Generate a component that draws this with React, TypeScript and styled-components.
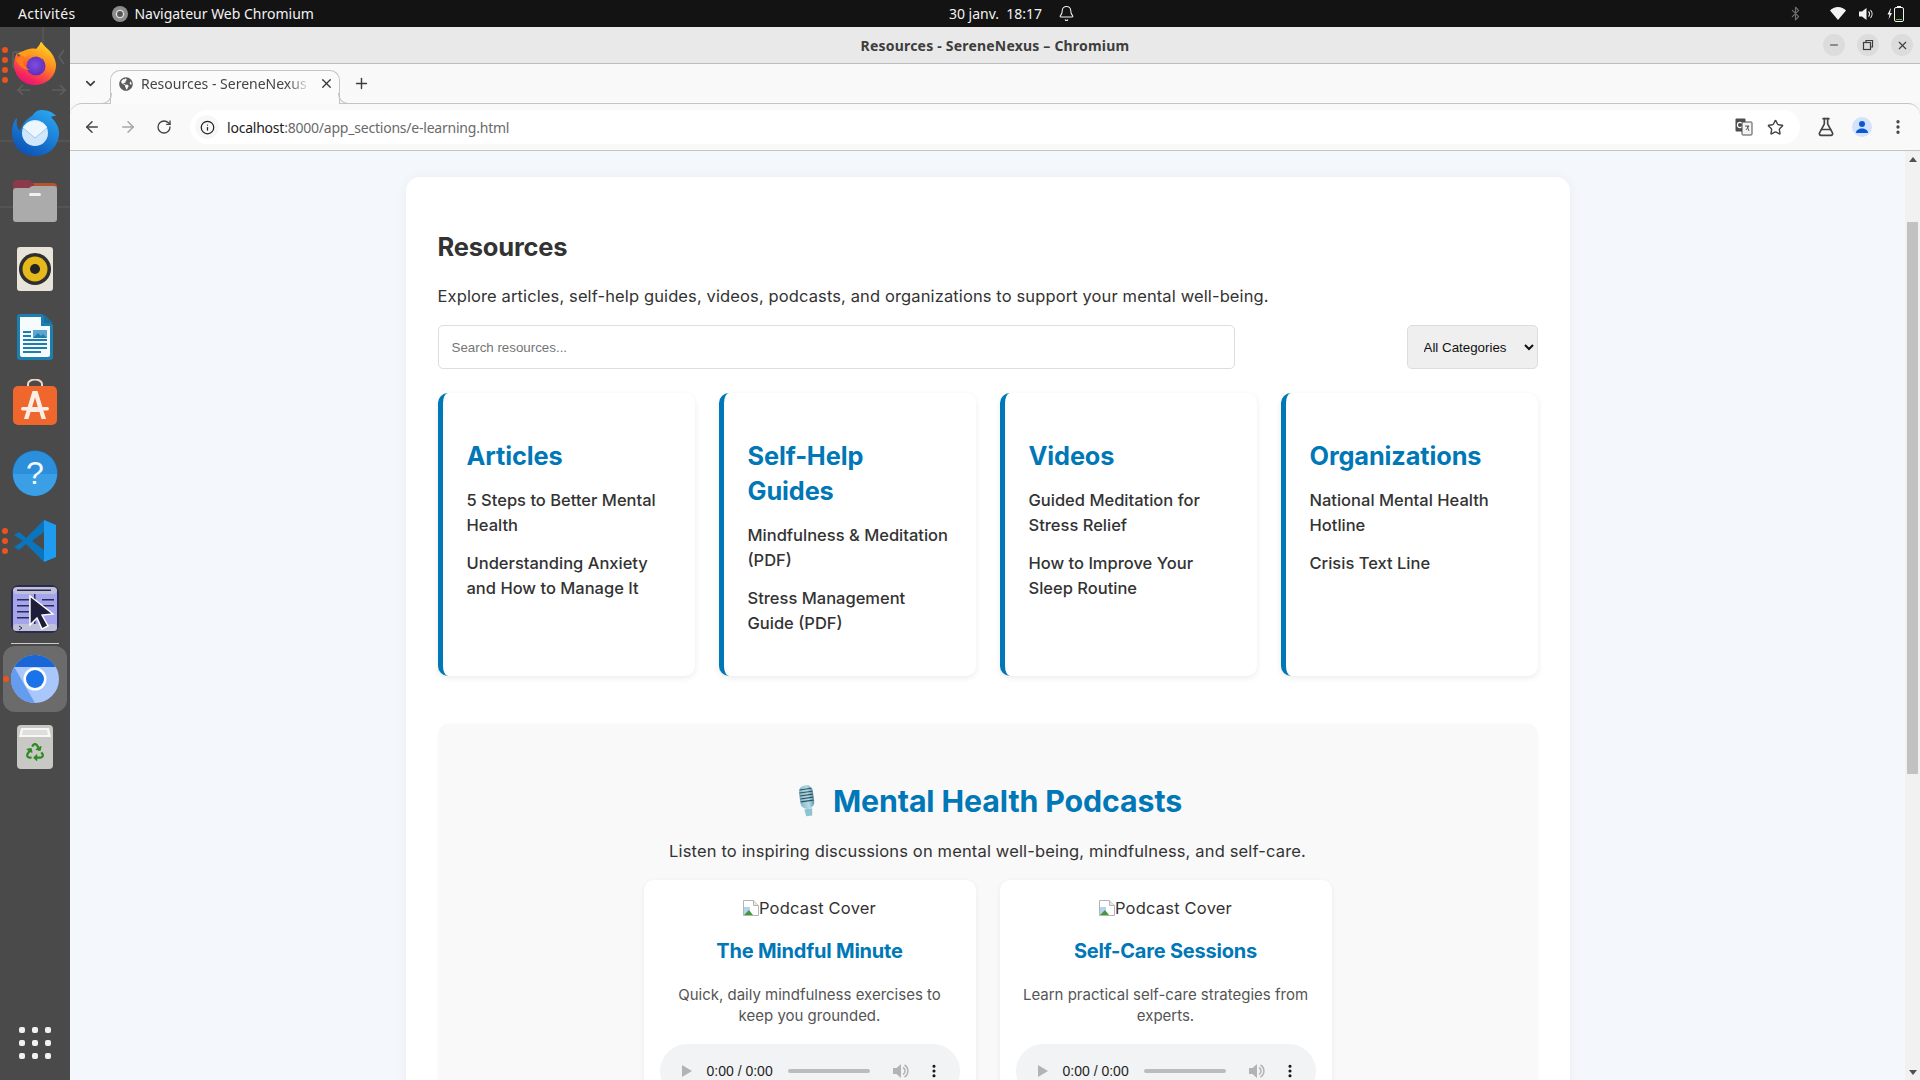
import styled, { createGlobalStyle } from "styled-components";
import {
  ArrowLeft,
  ArrowRight,
  Bell,
  Bluetooth,
  ChevronDown,
  EllipsisVertical,
  FlaskConical,
  Info,
  Minus,
  Plus,
  RotateCw,
  Star,
  X,
} from "lucide-react";
import { FaGlobeAmericas, FaRecycle } from "react-icons/fa";

const BLUE = "#0077b6";
const UI_FONT = `"Noto Sans", "Open Sans", "Liberation Sans", sans-serif`;
const PAGE_FONT = `Inter, "Open Sans", "Liberation Sans", sans-serif`;

const GlobalStyle = createGlobalStyle`
  html, body {
    margin: 0;
    padding: 0;
    height: 100%;
    overflow: hidden;
  }
  * {
    box-sizing: border-box;
  }
`;

const Desktop = styled.div`
  width: 1920px;
  height: 1080px;
  display: flex;
  flex-direction: column;
  overflow: hidden;
  font-family: ${UI_FONT};
`;

const TopBar = styled.header`
  height: 27px;
  flex: none;
  background: #131313;
  color: #f2f2f2;
  font-size: 14px;
  display: grid;
  grid-template-columns: 1fr auto 1fr;
  align-items: center;
  padding: 0 16px 0 18px;
`;

const TopLeft = styled.div`
  display: flex;
  align-items: center;
  letter-spacing: 0.3px;
`;

const AppName = styled.span`
  display: flex;
  align-items: center;
  gap: 6px;
  margin-left: 37px;
  letter-spacing: 0;
`;

const Clock = styled.div`
  display: flex;
  align-items: center;
  gap: 16px;
  margin-left: 102px;
`;

const Tray = styled.div`
  display: flex;
  align-items: center;
  justify-content: flex-end;
  gap: 13px;
`;

const TrayBluetooth = styled(Bluetooth)`
  margin-right: 14px;
`;

const Body = styled.div`
  flex: 1;
  min-height: 0;
  display: flex;
`;

const Dock = styled.nav`
  position: relative;
  width: 70px;
  flex: none;
  background: #4a4a4a;
  padding-top: 4px;
  display: flex;
  flex-direction: column;
  align-items: center;
`;

const DockGhost = styled.svg`
  position: absolute;
  left: 0;
  top: 0;
`;

const DockSlot = styled.div<{ $active?: boolean }>`
  position: relative;
  width: 64px;
  height: ${(p) => (p.$active ? 66 : 68)}px;
  margin: ${(p) => (p.$active ? "1px 0" : "0")};
  flex: none;
  display: flex;
  align-items: center;
  justify-content: center;
  border-radius: 12px;
  background: ${(p) => (p.$active ? "#6b6b6b" : "transparent")};
`;

const RunDots = styled.div<{ $left?: number }>`
  position: absolute;
  left: ${(p) => p.$left ?? -1}px;
  top: 50%;
  transform: translateY(-50%);
  display: flex;
  flex-direction: column;
  gap: 4px;
`;

const RunDot = styled.i`
  display: block;
  width: 6px;
  height: 6px;
  border-radius: 50%;
  background: #e9541f;
`;

const DockRule = styled.div`
  width: 48px;
  height: 1px;
  flex: none;
  background: #c9c9c9;
  margin-bottom: 1px;
`;

const AppGrid = styled.div`
  margin-top: auto;
  margin-bottom: 21px;
  display: grid;
  grid-template-columns: repeat(3, 6px);
  gap: 7px;
`;

const AppGridDot = styled.i`
  width: 6px;
  height: 6px;
  border-radius: 2px;
  background: #f1f1f1;
`;

const Browser = styled.main`
  flex: 1;
  min-width: 0;
  display: flex;
  flex-direction: column;
  background: #f4f7fb;
`;

const TitleBar = styled.div`
  height: 37px;
  flex: none;
  background: #e9e9e9;
  border-bottom: 1px solid #bdbdbd;
  display: flex;
  align-items: center;
  justify-content: flex-end;
  position: relative;
  padding-right: 7px;
  gap: 12px;
`;

const WindowTitle = styled.div`
  position: absolute;
  left: 0;
  right: 0;
  text-align: center;
  font-size: 14px;
  font-weight: 700;
  letter-spacing: 0.2px;
  color: #3d3d3d;
`;

const WindowButton = styled.button`
  width: 22px;
  height: 22px;
  border: none;
  padding: 0;
  border-radius: 50%;
  background: #dcdcdc;
  color: #3d3d3d;
  display: flex;
  align-items: center;
  justify-content: center;
`;

const TabStrip = styled.div`
  height: 39px;
  flex: none;
  background: #f9f9f9;
  display: flex;
  align-items: flex-end;
  padding-left: 7px;
`;

const StripButton = styled.div`
  width: 26px;
  height: 33px;
  padding-bottom: 6px;
  display: flex;
  align-items: center;
  justify-content: center;
  color: #3c3c3c;
  flex: none;
`;

const Tab = styled.div`
  position: relative;
  z-index: 1;
  width: 230px;
  height: 34px;
  margin: 0 8px -1px 7px;
  background: #fbfbfb;
  border: 1px solid #c4c4c4;
  border-bottom: none;
  border-radius: 10px 10px 0 0;
  display: flex;
  align-items: center;
  padding: 0 5px 8px 8px;
  gap: 8px;
  color: #5c5c5c;
  &::before,
  &::after {
    content: "";
    position: absolute;
    bottom: 0;
    width: 10px;
    height: 10px;
    border-bottom: 1px solid #c4c4c4;
  }
  &::before {
    left: -10px;
    border-right: 1px solid #c4c4c4;
    border-bottom-right-radius: 10px;
  }
  &::after {
    right: -10px;
    border-left: 1px solid #c4c4c4;
    border-bottom-left-radius: 10px;
  }
`;

const TabTitle = styled.span`
  flex: 1;
  min-width: 0;
  white-space: nowrap;
  overflow: hidden;
  font-size: 14px;
  color: #454545;
  -webkit-mask-image: linear-gradient(to right, #000 86%, transparent 100%);
  mask-image: linear-gradient(to right, #000 86%, transparent 100%);
`;

const Toolbar = styled.div`
  height: 48px;
  flex: none;
  background: #f9f9f9;
  border-top: 1px solid #c4c4c4;
  border-bottom: 1px solid #c4c4c4;
  border-radius: 12px 12px 0 0;
  display: flex;
  align-items: center;
  padding: 0 4px;
`;

const NavButton = styled.div<{ $muted?: boolean }>`
  width: 36px;
  height: 34px;
  flex: none;
  display: flex;
  align-items: center;
  justify-content: center;
  color: ${(p) => (p.$muted ? "#a6a6a6" : "#444")};
`;

const Omnibox = styled.div`
  flex: 1;
  height: 34px;
  margin: 0 8px;
  background: #ffffff;
  border-radius: 17px;
  display: flex;
  align-items: center;
  padding: 0 8px 0 5px;
`;

const InfoChip = styled.div`
  width: 24px;
  height: 24px;
  margin-right: 8px;
  border-radius: 50%;
  background: #f7f7f7;
  display: flex;
  align-items: center;
  justify-content: center;
  color: #222;
`;

const Url = styled.div`
  flex: 1;
  font-size: 14px;
  color: #6a6a6a;
  letter-spacing: -0.22px;
`;

const UrlHost = styled.span`
  color: #1c1c1c;
`;

const BookmarkStar = styled(Star)`
  margin: 0 8px 0 14px;
  color: #444;
`;

const Avatar = styled.div`
  width: 20px;
  height: 20px;
  border-radius: 50%;
  background: #d3e3fd;
  display: flex;
  align-items: center;
  justify-content: center;
`;

const Viewport = styled.div`
  flex: 1;
  min-height: 0;
  display: flex;
`;

const Page = styled.div`
  flex: 1;
  min-width: 0;
  overflow: hidden;
  padding-top: 26px;
  display: flex;
  justify-content: center;
  font-family: ${PAGE_FONT};
`;

const ScrollTrack = styled.div`
  width: 15px;
  flex: none;
  background: #f1f1f1;
  display: flex;
  flex-direction: column;
  align-items: center;
  padding: 6px 0 5px;
`;

const ScrollThumb = styled.div`
  width: 11px;
  height: 552px;
  margin: 60px 0 auto;
  background: #c1c1c1;
`;

const Arrow = styled.i<{ $down?: boolean }>`
  display: block;
  width: 0;
  height: 0;
  border-left: 4px solid transparent;
  border-right: 4px solid transparent;
  ${(p) =>
    p.$down
      ? "border-top: 5px solid #505050;"
      : "border-bottom: 5px solid #505050;"}
`;

const Container = styled.div`
  width: 1164px;
  height: 1400px;
  flex: none;
  background: #ffffff;
  border-radius: 14px;
  box-shadow: 0 0 12px rgba(0, 0, 0, 0.05);
  padding: 54px 32px 0;
`;

const Heading = styled.h1`
  margin: 0 0 20px;
  font-size: 25.5px;
  line-height: 32px;
  font-weight: 700;
  color: #333;
  letter-spacing: -0.2px;
`;

const Lead = styled.p`
  margin: 0 0 16px;
  font-size: 16.5px;
  line-height: 26px;
  color: #333;
  letter-spacing: 0.12px;
`;

const Filters = styled.div`
  display: flex;
  justify-content: space-between;
  margin-bottom: 24px;
`;

const SearchInput = styled.input`
  width: 797px;
  height: 44px;
  padding: 0 13px;
  border: 1px solid #ddd;
  border-radius: 5px;
  background: #fff;
  font-family: "Liberation Sans", Arial, sans-serif;
  font-size: 13.33px;
  outline: none;
  &::placeholder {
    color: #757575;
  }
`;

const CategorySelect = styled.select`
  width: 131px;
  height: 44px;
  padding: 0 12px;
  border: 1px solid #ddd;
  border-radius: 5px;
  background: #efefef;
  color: #111;
  font-family: "Liberation Sans", Arial, sans-serif;
  font-size: 13.33px;
`;

const ResourceGrid = styled.div`
  display: grid;
  grid-template-columns: repeat(4, 1fr);
  gap: 24px;
  margin-bottom: 48px;
`;

const ResourceCard = styled.section`
  height: 283px;
  background: #fff;
  border-left: 5px solid ${BLUE};
  border-radius: 10px;
  box-shadow: 0 2px 6px rgba(0, 0, 0, 0.08);
  padding: 45px 24px 0;
`;

const ResourceTitle = styled.h3`
  margin: 0 0 15px;
  font-size: 25.3px;
  line-height: 35px;
  font-weight: 700;
  color: ${BLUE};
  letter-spacing: -0.1px;
`;

const ResourceLink = styled.a`
  display: block;
  margin-bottom: 13px;
  font-size: 16.5px;
  line-height: 25px;
  font-weight: 500;
  color: #333;
`;

const PodcastPanel = styled.section`
  background: #f9f9f9;
  border-radius: 10px;
  box-shadow: 0 0 4px rgba(0, 0, 0, 0.02);
  height: 500px;
  padding: 56px 0 0;
  display: flex;
  flex-direction: column;
  align-items: center;
`;

const PodcastTitle = styled.h2`
  margin: 0 0 16px;
  display: flex;
  align-items: center;
  gap: 12px;
  font-size: 30.3px;
  line-height: 42px;
  font-weight: 700;
  color: ${BLUE};
  letter-spacing: -0.1px;
`;

const PodcastLead = styled.p`
  margin: 0 0 16px;
  font-size: 16.5px;
  line-height: 26px;
  color: #333;
  letter-spacing: 0.15px;
`;

const PodcastRow = styled.div`
  display: flex;
  gap: 24px;
`;

const PodcastCard = styled.article`
  width: 332px;
  height: 320px;
  background: #fff;
  border-radius: 10px;
  box-shadow: 0 1px 5px rgba(0, 0, 0, 0.06);
  padding: 16px 16px 0;
  display: flex;
  flex-direction: column;
  align-items: center;
  text-align: center;
`;

const BrokenCover = styled.div`
  height: 24px;
  display: flex;
  align-items: center;
  margin-bottom: 18px;
  font-size: 16.5px;
  letter-spacing: 0.2px;
  line-height: 20px;
  color: #333;
`;

const EpisodeTitle = styled.h4`
  margin: 0 0 19px;
  font-size: 20px;
  line-height: 27px;
  font-weight: 700;
  color: ${BLUE};
  letter-spacing: -0.2px;
`;

const EpisodeText = styled.p`
  margin: 0 0 18px;
  font-size: 15px;
  line-height: 21px;
  color: #555;
`;

const AudioBar = styled.div`
  width: 300px;
  height: 54px;
  flex: none;
  border-radius: 27px;
  background: #f1f3f4;
  display: flex;
  align-items: center;
  padding: 0 14px 0 21px;
  font-family: "Liberation Sans", Arial, sans-serif;
  font-size: 14px;
  color: #1f1f1f;
`;

const AudioTime = styled.span`
  margin-left: 14px;
`;

const AudioTrack = styled.div`
  width: 82px;
  height: 4px;
  margin: 0 0 0 15px;
  border-radius: 2px;
  background: #bcbcbc;
`;

const AudioVolume = styled.div`
  margin-left: 23px;
  display: flex;
`;

const AudioMenu = styled.div`
  margin-left: 17px;
  display: flex;
  color: #111;
`;

/* ---- drawn app icons ---- */

const ChromiumSmall = () => (
  <svg width="16" height="16" viewBox="0 0 16 16">
    <circle cx="8" cy="8" r="8" fill="#8c8c8c" />
    <circle cx="8" cy="8" r="3.6" fill="#555" stroke="#ddd" strokeWidth="1.4" />
  </svg>
);

const Firefox = () => (
  <svg width="44" height="46" viewBox="0 2 44 46">
    <defs>
      <linearGradient id="ffA" x1="0.8" y1="0" x2="0.3" y2="1">
        <stop offset="0" stopColor="#ffe226" />
        <stop offset="0.45" stopColor="#ff8a1f" />
        <stop offset="0.85" stopColor="#f5245e" />
        <stop offset="1" stopColor="#e3147f" />
      </linearGradient>
      <radialGradient id="ffB" cx="0.45" cy="0.45" r="0.6">
        <stop offset="0" stopColor="#7f4ee0" />
        <stop offset="1" stopColor="#5b2bb8" />
      </radialGradient>
    </defs>
    <path
      d="M28 1c2 5 8 8 11 13 3 4 4 9 4 11 0 11-9 20-21 20S1 36 1 24c0-4 1-8 3-11 0 2 1 3 2 4 1-3 3-5 5-6 3-2 8-3 12-2 2-2 4-4 5-8Z"
      fill="url(#ffA)"
    />
    <circle cx="23" cy="26" r="9.5" fill="url(#ffB)" />
    <path
      d="M4 14c3 1 6 1 8 3 4-3 10-3 14 0 5 4 6 10 3 15 4-7 0-15-6-18-3-1-4-4-9-4-4 1-7 2-10 4Z"
      fill="#ff9c1a"
    />
    <path
      d="M3 19c2 7 8 11 14 11-4-2-7-5-7-9 2-1 3-2 3-3-3-2-7-1-10 1Z"
      fill="#ff7b19"
    />
  </svg>
);

const Thunderbird = () => (
  <svg width="48" height="48" viewBox="0 0 48 48">
    <defs>
      <linearGradient id="tbA" x1="0.8" y1="0" x2="0.2" y2="1">
        <stop offset="0" stopColor="#2aa6f2" />
        <stop offset="1" stopColor="#0a4fb3" />
      </linearGradient>
    </defs>
    <path
      d="M30 1c6 0 12 2 15 6-2 0-4 0-5 1 5 5 8 10 8 16 0 13-10 23-24 23S1 37 1 23C1 17 3 11 6 9c-1 5 0 10 3 13 2-7 6-12 12-15 2-3 5-6 9-6Z"
      fill="url(#tbA)"
    />
    <circle cx="24" cy="24" r="13" fill="#cfe6fb" />
    <path d="M12 19l12 10 12-10v-1c-3-4-7-6-12-6s-9 2-12 6Z" fill="#eef6fd" />
    <path d="M12 19l12 10 12-10" fill="none" stroke="#9dc9ee" strokeWidth="1" />
  </svg>
);

const Files = () => (
  <svg width="44" height="42" viewBox="0 0 44 42">
    <path d="M0 4a4 4 0 0 1 4-4h12l4 3h20a4 4 0 0 1 4 4v12H0Z" fill="#8a3a48" />
    <path d="M20 3h20a4 4 0 0 1 4 4v6H24Z" fill="#b4532c" />
    <path
      d="M0 11a3 3 0 0 1 3-3h13l3-2h22a3 3 0 0 1 3 3v30a3 3 0 0 1-3 3H3a3 3 0 0 1-3-3Z"
      fill="#ababab"
    />
    <rect x="16" y="13" width="12" height="3" rx="1.5" fill="#f0f0f0" />
  </svg>
);

const Rhythmbox = () => (
  <svg width="36" height="44" viewBox="0 0 36 44">
    <rect width="36" height="44" rx="3" fill="#e8e4da" />
    <circle cx="18" cy="22" r="16" fill="#2f2f2f" />
    <circle cx="18" cy="22" r="12.5" fill="#e5b81c" />
    <circle cx="18" cy="22" r="5" fill="#242424" />
  </svg>
);

const Writer = () => (
  <svg width="36" height="46" viewBox="0 0 36 46">
    <path d="M3 0h22l11 11v32a3 3 0 0 1-3 3H3a3 3 0 0 1-3-3V3a3 3 0 0 1 3-3Z" fill="#1c7fb0" />
    <path d="M3 3h21v9h9v29a2 2 0 0 1-2 2H5a2 2 0 0 1-2-2Z" fill="#f6fbfe" />
    <path d="M27 0l9 9h-9Z" fill="#1c6e9c" />
    <g fill="#1c7fb0">
      <rect x="6" y="17" width="8" height="2" />
      <rect x="6" y="21" width="8" height="2" />
      <rect x="6" y="25" width="24" height="2" />
      <rect x="6" y="29" width="24" height="2" />
      <rect x="6" y="33" width="24" height="2" />
      <rect x="6" y="37" width="18" height="2" />
    </g>
    <rect x="16" y="16" width="14" height="8" fill="#5aa8d0" />
    <path d="M16 24l5-5 3 3 2-2 4 4Z" fill="#1c7fb0" />
  </svg>
);

const AppCenter = () => (
  <svg width="44" height="52" viewBox="0 0 44 52">
    <path d="M15 8V5a7 4.500 0 0 1 14 0v3" fill="none" stroke="#f2d7c5" strokeWidth="2" />
    <rect y="7" width="44" height="39" rx="5" fill="#f0672d" />
    <path d="M19.500 12h5L33 40h-4.500l-2-7h-9l-2 7H11ZM19 28.500h6l-3-10Z" fill="#fbeee6" fillRule="evenodd" />
    <rect x="8" y="28" width="28" height="3.500" rx="1.700" fill="#fbeee6" />
  </svg>
);

const Help = () => (
  <svg width="46" height="46" viewBox="0 0 46 46">
    <circle cx="23" cy="23" r="22.500" fill="#2c8fdc" stroke="#1f5f96" strokeWidth="0.6" />
    <path d="M1 24h44a22 22 0 0 1-44 0Z" fill="#3b9fe6" />
    <text x="23" y="34" textAnchor="middle" fontFamily="Liberation Sans, sans-serif" fontSize="32" fill="#f5f9fd">
      ?
    </text>
  </svg>
);

const VSCode = () => (
  <svg width="42" height="42" viewBox="0 0 42 42">
    <path d="M30 0 42 5v32l-12 5L12 24l-7 6-5-3 9-6-9-6 5-3 7 6Z" fill="#0a74bd" />
    <path d="M30 0 42 5v32l-12 5Z" fill="#1f9cf0" />
    <path d="M30 12 18 21l12 9Z" fill="#4a4a4a" />
  </svg>
);

const CursorApp = () => (
  <svg width="48" height="48" viewBox="0 0 48 48">
    <rect x="1" y="1" width="46" height="46" rx="7" fill="#a5a5ee" stroke="#2a2a52" strokeWidth="2" />
    <rect x="2" y="2" width="44" height="7" rx="4" fill="#c0c0d8" />
    <rect x="6" y="4.500" width="34" height="1.500" fill="#2a2a52" />
    <rect x="2" y="39" width="44" height="7" rx="3" fill="#c0c0d8" />
    <path d="M8 41l3 2-3 2" fill="none" stroke="#2a2a52" strokeWidth="1" />
    <g fill="#2a2a52">
      <rect x="6" y="14" width="12" height="1.500" />
      <rect x="6" y="20" width="12" height="1.500" />
      <rect x="6" y="26" width="12" height="1.500" />
      <rect x="6" y="32" width="12" height="1.500" />
      <rect x="31" y="14" width="12" height="1.500" />
      <rect x="31" y="20" width="12" height="1.500" />
      <rect x="23" y="9" width="1.500" height="30" />
    </g>
    <path d="M19 11 42 29l-11 1 6 11-6 3-5-11-7 7Z" fill="#1e1e3a" stroke="#fff" strokeWidth="1.400" />
  </svg>
);

const Chromium = () => (
  <svg width="48" height="48" viewBox="0 0 48 48">
    <circle cx="24" cy="24" r="24" fill="#a9c7fa" />
    <path d="M3.200 12A24 24 0 0 1 44.800 12H24Z" fill="#1a66d6" />
    <path d="M3.200 12 13.600 30 24 48A24 24 0 0 1 3.200 12Z" fill="#659cf0" />
    <circle cx="24" cy="24" r="11.500" fill="#fff" />
    <circle cx="24" cy="24" r="9" fill="#1a73e8" />
  </svg>
);

const Trash = () => (
  <svg width="36" height="44" viewBox="0 0 36 44">
    <rect width="36" height="44" rx="4" fill="#c8c8c4" />
    <path d="M4 3h28l2 9H2Z" fill="#f7f7f5" />
    <path d="M6 5h24l1 5H5Z" fill="#dedede" />
    <FaRecycle x="9" y="18" size={18} color="#2f8a24" />
  </svg>
);

const Mic = () => (
  <svg width="28" height="34" viewBox="0 0 28 34">
    <defs>
      <linearGradient id="micA" x1="0" y1="0" x2="1" y2="0">
        <stop offset="0" stopColor="#7fb6c9" />
        <stop offset="0.6" stopColor="#b4dbe6" />
        <stop offset="1" stopColor="#5c93a8" />
      </linearGradient>
    </defs>
    <g transform="rotate(-8 14 16)">
      <rect x="7" y="1" width="14" height="24" rx="7" fill="url(#micA)" />
      <g stroke="#34525e" strokeWidth="1.100">
        <path d="M8 5h12M7.500 8h13M7.500 11h13M7.500 14h13M7.500 17h13" />
      </g>
      <path d="M10 25h8l-1 7h-6Z" fill="#8cc4d4" />
    </g>
  </svg>
);

const BrokenImage = () => (
  <svg width="16" height="16" viewBox="0 0 16 16">
    <path d="M.5.5h10l5 5v10H.5Z" fill="#fff" stroke="#b4b4b4" />
    <path d="M10.500.5v5h5" fill="#e8e8e8" stroke="#b4b4b4" />
    <path d="M1 7h6v3L1 15Z" fill="#b8d0f4" />
    <path d="M1 15l5-5 4 5Z" fill="#3f9c35" />
  </svg>
);

const TranslateIcon = () => (
  <svg width="18" height="18" viewBox="0 0 18 18">
    <rect x="0.5" y="0.5" width="10" height="13" rx="1" fill="#4d4d4d" />
    <circle cx="5" cy="7" r="2.600" fill="none" stroke="#fff" strokeWidth="1.100" />
    <rect x="7" y="4" width="10" height="13" rx="0.800" fill="#f3f3f3" stroke="#4d4d4d" />
    <path d="M10 8h4M12 8l2 5M14 8l-3 4" fill="none" stroke="#4d4d4d" strokeWidth="0.900" />
  </svg>
);

const PersonIcon = () => (
  <svg width="14" height="14" viewBox="0 0 14 14" fill="#0b57d0">
    <circle cx="7" cy="4" r="3" />
    <path d="M1 13c0-3 3-4.500 6-4.500s6 1.500 6 4.500Z" />
  </svg>
);

const WifiIcon = () => (
  <svg width="16" height="13" viewBox="0 0 16 13" fill="#f2f2f2">
    <path d="M0 3.500C2 1.500 5 0 8 0s6 1.500 8 3.500L8 13Z" />
  </svg>
);

const SpeakerIcon = () => (
  <svg width="15" height="14" viewBox="0 0 15 14">
    <path d="M0 4.500h3L7.500 1v12L3 9.500H0Z" fill="#f2f2f2" />
    <path d="M9.500 4.500a3.500 3.500 0 0 1 0 5M11.500 3a6 6 0 0 1 0 8" fill="none" stroke="#f2f2f2" strokeWidth="1.100" />
  </svg>
);

const BatteryIcon = () => (
  <svg width="17" height="16" viewBox="0 0 17 16">
    <path d="M3.500 2.500 0.500 8.500h2l-1 5 3.500-6.500h-2l1-4.500Z" fill="#f2f2f2" />
    <rect x="7.500" y="1.500" width="9" height="14" rx="1.500" fill="none" stroke="#f2f2f2" />
    <rect x="10" y="0" width="4" height="2" fill="#f2f2f2" />
    <rect x="9" y="13" width="6" height="1" fill="#62c030" />
  </svg>
);

const PlayIcon = () => (
  <svg width="12" height="14" viewBox="0 0 12 14">
    <path d="M1 1l10 6-10 6Z" fill="#b3b3b3" />
  </svg>
);

const MutedSpeaker = () => (
  <svg width="16" height="16" viewBox="0 0 16 16">
    <path d="M0 5h3.500L8 1v14l-4.500-4H0Z" fill="#b3b3b3" />
    <path d="M10 4.500a4 4 0 0 1 0 7M11.500 2a7 7 0 0 1 0 12" fill="none" stroke="#b3b3b3" strokeWidth="1.500" />
  </svg>
);

const resources = [
  {
    title: "Articles",
    links: ["5 Steps to Better Mental Health", "Understanding Anxiety and How to Manage It"],
  },
  {
    title: "Self-Help Guides",
    links: ["Mindfulness & Meditation (PDF)", "Stress Management Guide (PDF)"],
  },
  {
    title: "Videos",
    links: ["Guided Meditation for Stress Relief", "How to Improve Your Sleep Routine"],
  },
  {
    title: "Organizations",
    links: ["National Mental Health Hotline", "Crisis Text Line"],
  },
];

const podcasts = [
  {
    title: "The Mindful Minute",
    text: "Quick, daily mindfulness exercises to keep you grounded.",
  },
  {
    title: "Self-Care Sessions",
    text: "Learn practical self-care strategies from experts.",
  },
];

const dockApps = [
  { key: "firefox", icon: <Firefox />, dots: 4 },
  { key: "thunderbird", icon: <Thunderbird />, dots: 0 },
  { key: "files", icon: <Files />, dots: 0 },
  { key: "rhythmbox", icon: <Rhythmbox />, dots: 0 },
  { key: "writer", icon: <Writer />, dots: 0 },
  { key: "appcenter", icon: <AppCenter />, dots: 0 },
  { key: "help", icon: <Help />, dots: 0 },
  { key: "vscode", icon: <VSCode />, dots: 3 },
  { key: "cursor", icon: <CursorApp />, dots: 0 },
];

const Dots = ({ count, left }: { count: number; left?: number }) => (
  <RunDots $left={left}>
    {Array.from({ length: count }, (_, i) => (
      <RunDot key={i} />
    ))}
  </RunDots>
);

const App = () => {
  return (
    <Desktop>
      <GlobalStyle />
      <TopBar>
        <TopLeft>
          Activités
          <AppName>
            <ChromiumSmall />
            Navigateur Web Chromium
          </AppName>
        </TopLeft>
        <Clock>
          <span>30 janv.&nbsp;&nbsp;18:17</span>
          <Bell size={17} strokeWidth={1.5} />
        </Clock>
        <Tray>
          <TrayBluetooth size={15} color="#6c6c6c" />
          <WifiIcon />
          <SpeakerIcon />
          <BatteryIcon />
        </Tray>
      </TopBar>
      <Body>
        <Dock>
          <DockGhost width="70" height="1053" fill="none" stroke="#5f5f5f" strokeWidth="1.500">
            <path d="M43 0v36M0 114h70M0 180h70" strokeWidth="1" />
            <rect x="13" y="25" width="16" height="16" rx="2" />
            <path d="M64 23l-5 7 5 7M30 63H18l5-5M18 63l5 5M52 63h13l-5-5M65 63l-5 5" />
          </DockGhost>
          {dockApps.map((app) => (
            <DockSlot key={app.key}>
              {app.dots > 0 && <Dots count={app.dots} />}
              {app.icon}
            </DockSlot>
          ))}
          <DockRule />
          <DockSlot $active>
            <Dots count={1} left={0} />
            <Chromium />
          </DockSlot>
          <DockSlot>
            <Trash />
          </DockSlot>
          <AppGrid>
            {Array.from({ length: 9 }, (_, i) => (
              <AppGridDot key={i} />
            ))}
          </AppGrid>
        </Dock>
        <Browser>
          <TitleBar>
            <WindowTitle>Resources - SereneNexus – Chromium</WindowTitle>
            <WindowButton>
              <Minus size={12} />
            </WindowButton>
            <WindowButton>
              <svg width="12" height="12" viewBox="0 0 12 12" fill="none" stroke="#3d3d3d" strokeWidth="1.200">
                <rect x="1.500" y="3.500" width="7" height="7" />
                <path d="M4 3V1.500h6.500V8H9" />
              </svg>
            </WindowButton>
            <WindowButton>
              <X size={13} />
            </WindowButton>
          </TitleBar>
          <TabStrip>
            <StripButton>
              <ChevronDown size={15} strokeWidth={2.6} />
            </StripButton>
            <Tab>
              <FaGlobeAmericas size={14} />
              <TabTitle>Resources - SereneNexus</TabTitle>
              <X size={15} strokeWidth={2} color="#333" />
            </Tab>
            <StripButton>
              <Plus size={17} strokeWidth={2} />
            </StripButton>
          </TabStrip>
          <Toolbar>
            <NavButton>
              <ArrowLeft size={18} strokeWidth={2} />
            </NavButton>
            <NavButton $muted>
              <ArrowRight size={18} strokeWidth={2} />
            </NavButton>
            <NavButton>
              <RotateCw size={16} strokeWidth={2} />
            </NavButton>
            <Omnibox>
              <InfoChip>
                <Info size={15} strokeWidth={2} />
              </InfoChip>
              <Url>
                <UrlHost>localhost</UrlHost>:8000/app_sections/e-learning.html
              </Url>
              <TranslateIcon />
              <BookmarkStar size={17} strokeWidth={2} />
            </Omnibox>
            <NavButton>
              <FlaskConical size={20} strokeWidth={2} />
            </NavButton>
            <NavButton>
              <Avatar>
                <PersonIcon />
              </Avatar>
            </NavButton>
            <NavButton>
              <EllipsisVertical size={18} strokeWidth={2.4} />
            </NavButton>
          </Toolbar>
          <Viewport>
            <Page>
              <Container>
                <Heading>Resources</Heading>
                <Lead>
                  Explore articles, self-help guides, videos, podcasts, and organizations to support your mental
                  well-being.
                </Lead>
                <Filters>
                  <SearchInput placeholder="Search resources..." />
                  <CategorySelect defaultValue="all">
                    <option value="all">All Categories</option>
                  </CategorySelect>
                </Filters>
                <ResourceGrid>
                  {resources.map((group) => (
                    <ResourceCard key={group.title}>
                      <ResourceTitle>{group.title}</ResourceTitle>
                      {group.links.map((link) => (
                        <ResourceLink key={link}>{link}</ResourceLink>
                      ))}
                    </ResourceCard>
                  ))}
                </ResourceGrid>
                <PodcastPanel>
                  <PodcastTitle>
                    <Mic />
                    Mental Health Podcasts
                  </PodcastTitle>
                  <PodcastLead>
                    Listen to inspiring discussions on mental well-being, mindfulness, and self-care.
                  </PodcastLead>
                  <PodcastRow>
                    {podcasts.map((podcast) => (
                      <PodcastCard key={podcast.title}>
                        <BrokenCover>
                          <BrokenImage />
                          Podcast Cover
                        </BrokenCover>
                        <EpisodeTitle>{podcast.title}</EpisodeTitle>
                        <EpisodeText>{podcast.text}</EpisodeText>
                        <AudioBar>
                          <PlayIcon />
                          <AudioTime>0:00 / 0:00</AudioTime>
                          <AudioTrack />
                          <AudioVolume>
                            <MutedSpeaker />
                          </AudioVolume>
                          <AudioMenu>
                            <EllipsisVertical size={16} strokeWidth={2.6} />
                          </AudioMenu>
                        </AudioBar>
                      </PodcastCard>
                    ))}
                  </PodcastRow>
                </PodcastPanel>
              </Container>
            </Page>
            <ScrollTrack>
              <Arrow />
              <ScrollThumb />
              <Arrow $down />
            </ScrollTrack>
          </Viewport>
        </Browser>
      </Body>
    </Desktop>
  );
};

export default App;
